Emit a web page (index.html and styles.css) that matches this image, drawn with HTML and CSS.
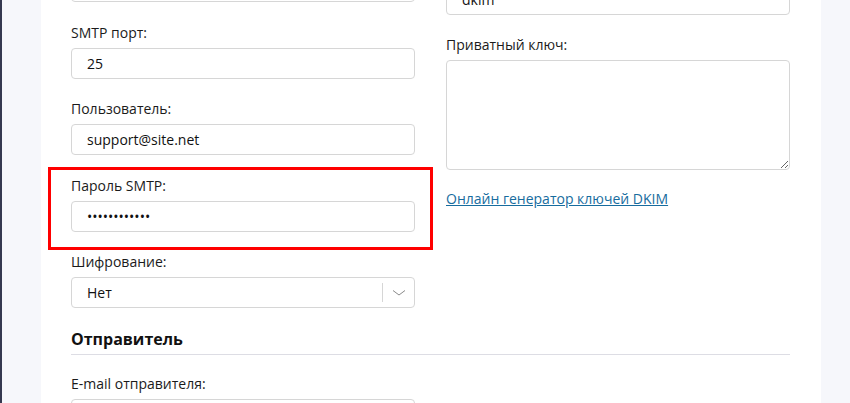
FILE: index.html
```html
<!DOCTYPE html>
<html lang="ru">
<head>
  <meta charset="UTF-8">
  <meta name="viewport" content="width=device-width, initial-scale=1.0">
  <title>Настройки почты</title>
  <link rel="stylesheet" href="styles.css">
</head>
<body>
  <div class="app">
    <aside class="rail"></aside>
    <main class="panel">
      <div class="panel-inner">
        <div class="cols">
          <div class="col">
            <div class="field">
              <label class="label">SMTP сервер:</label>
              <input class="input" type="text" value="smtp.site.net">
            </div>
            <div class="field">
              <label class="label">SMTP порт:</label>
              <input class="input" type="text" value="25">
            </div>
            <div class="field">
              <label class="label">Пользователь:</label>
              <input class="input" type="text" value="support@site.net">
            </div>
            <!-- выделенное поле -->
            <div class="field field-marked">
              <label class="label">Пароль SMTP:</label>
              <input class="input" type="password" value="123456789012">
            </div>
            <div class="field">
              <label class="label">Шифрование:</label>
              <div class="select">
                <span class="select-value">Нет</span>
                <span class="select-arrow">
                  <svg width="14" height="8" viewBox="0 0 14 8"><path d="M1 1.5 L7 6 L13 1.5" fill="none" stroke="#8a8a8a" stroke-width="1"/></svg>
                </span>
              </div>
            </div>
          </div>

          <div class="col col-right">
            <div class="field">
              <label class="label">DKIM селектор:</label>
              <input class="input" type="text" value="dkim">
            </div>
            <div class="field">
              <label class="label">Приватный ключ:</label>
              <textarea class="textarea"></textarea>
            </div>
            <a class="link" href="#">Онлайн генератор ключей DKIM</a>
          </div>
        </div>

        <h3 class="section-title">Отправитель</h3>

        <div class="cols">
          <div class="col">
            <div class="field">
              <label class="label">E-mail отправителя:</label>
              <input class="input" type="text" value="">
            </div>
          </div>
        </div>
      </div>
    </main>
  </div>
</body>
</html>
```

FILE: styles.css
```css
html, body {
  margin: 0;
  height: 100%;
}

body {
  background: #f6f7fb;
  font-family: "Open Sans", "Noto Sans", sans-serif;
  font-size: 14px;
  color: #1b1b1b;
  overflow: hidden;
}

.app {
  display: flex;
  height: 100%;
}

.rail {
  width: 2px;
  background: #353950;
  flex: none;
}

.panel {
  margin-left: 39px;
  width: 780px;
  background: #fff;
  box-sizing: border-box;
  padding: 0 31px 0 30px;
  overflow: hidden;
}

.panel-inner {
  margin-top: -53px;
}

.cols {
  display: grid;
  grid-template-columns: 344px 344px;
  column-gap: 31px;
}

.col {
  display: flex;
  flex-direction: column;
  gap: 21.5px;
}

.col-right {
  padding-top: 12.5px;
}

.field {
  display: flex;
  flex-direction: column;
}

.label {
  line-height: 18px;
  margin-bottom: 6px;
}

.input {
  box-sizing: border-box;
  height: 31px;
  border: 1px solid #d6d6d6;
  border-radius: 4px;
  padding: 0 15px;
  font-family: inherit;
  font-size: 14px;
  color: #111;
  background: #fff;
  outline: none;
}

.field-marked {
  position: relative;
}

.field-marked::after {
  content: "";
  position: absolute;
  top: -10px;
  left: -23px;
  right: -18px;
  bottom: -18px;
  border: 3px solid #f00;
  pointer-events: none;
}

.select {
  box-sizing: border-box;
  height: 31px;
  border: 1px solid #d6d6d6;
  border-radius: 4px;
  display: flex;
  align-items: center;
  padding-left: 15px;
  color: #111;
}

.select-value {
  flex: 1;
}

.select-arrow {
  width: 31px;
  height: 19px;
  border-left: 1px solid #d6d6d6;
  display: flex;
  align-items: center;
  justify-content: center;
}

.textarea {
  box-sizing: border-box;
  height: 110px;
  border: 1px solid #d6d6d6;
  border-radius: 4px;
  font-family: inherit;
  font-size: 14px;
  padding: 8px 15px;
  outline: none;
}

.link {
  margin-top: -1.5px;
  line-height: 18px;
  color: #176c9e;
  text-decoration: underline;
  align-self: flex-start;
}

.section-title {
  margin: 20px 0 0;
  padding-bottom: 4px;
  font-size: 16px;
  line-height: 22px;
  font-weight: 700;
  color: #111;
  border-bottom: 1px solid #dddde4;
}

.section-title + .cols {
  margin-top: 20px;
}
```
